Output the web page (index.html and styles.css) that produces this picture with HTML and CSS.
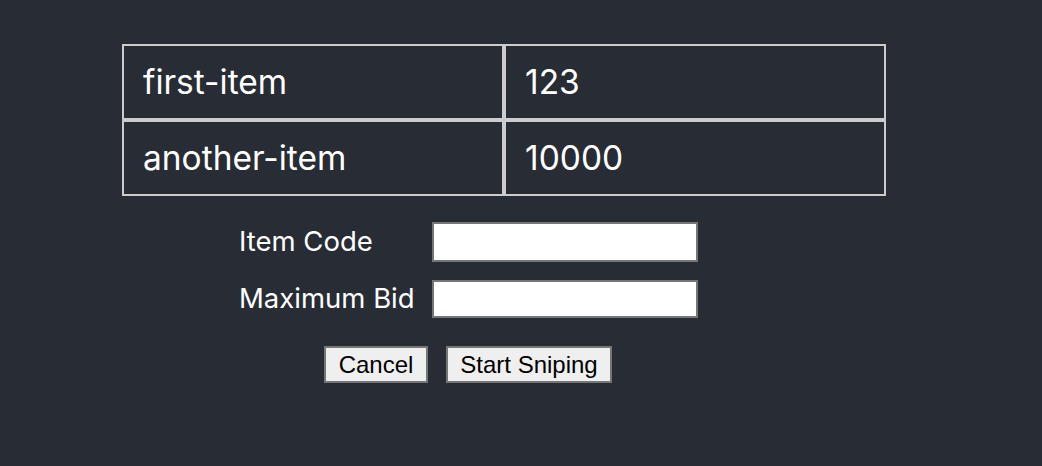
FILE: index.html
```html
<!DOCTYPE html>
<html>
<head>
<meta charset="utf-8">
<link rel="stylesheet" href="styles.css">
</head>
<body>
<div class="app">
  <table class="items">
    <tr><td>first-item</td><td>123</td></tr>
    <tr><td>another-item</td><td>10000</td></tr>
  </table>
  <form class="snipe">
    <div class="fields">
      <label class="label" for="code">Item Code</label>
      <input class="field field-code" id="code" type="text">
      <label class="label" for="bid">Maximum Bid</label>
      <input class="field field-bid" id="bid" type="text">
    </div>
    <div class="actions">
      <button type="button" class="btn btn-cancel">Cancel</button>
      <button type="button" class="btn btn-start">Start Sniping</button>
    </div>
  </form>
</div>
</body>
</html>
```
FILE: styles.css
```css
html, body {
  margin: 0;
  padding: 0;
  background: #282c34;
  height: 100%;
}
.app {
  padding: 44px 0 0 122px;
  color: #fff;
  font-family: Inter, "Liberation Sans", sans-serif;
}
.items {
  border-spacing: 0;
  width: 764px;
}
.items td {
  border: 2px solid #cccccc;
  box-sizing: content-box;
  width: 359px;
  height: 72px;
  padding: 0 0 0 19px;
  font-size: 33.5px;
  font-weight: 400;
  vertical-align: middle;
}
.snipe {
  margin: 26px 0 0 117px;
  width: 459px;
}
.fields {
  display: grid;
  grid-template-columns: 193px 266px;
  row-gap: 18px;
  align-items: center;
}
.label {
  font-size: 27.5px;
  line-height: 32px;
  padding-bottom: 3px;
}
.field {
  box-sizing: border-box;
  width: 266px;
  border: 2px solid #767676;
  background: #fff;
  margin: 0;
  padding: 0;
}
.field-code { height: 40px; }
.field-bid { height: 38px; }
.actions {
  display: flex;
  gap: 18px;
  justify-content: flex-start;
  margin-top: 28px;
  padding-left: 85px;
}
.btn {
  font-family: "Liberation Sans", Arial, sans-serif;
  font-size: 24px;
  color: #000;
  background: #efefef;
  border: 2px solid #767676;
  height: 37px;
  padding: 0;
  margin: 0;
}
.btn-cancel { width: 104px; }
.btn-start { width: 166px; }
```
